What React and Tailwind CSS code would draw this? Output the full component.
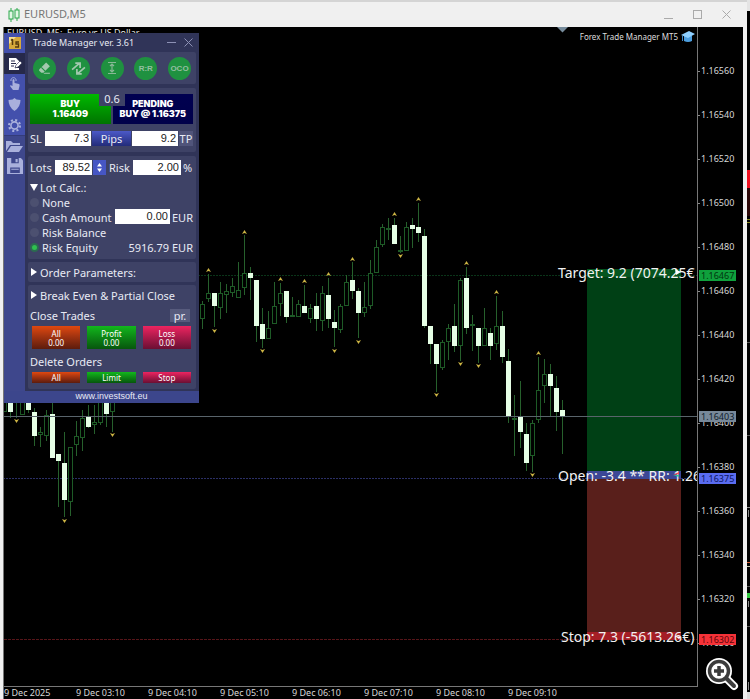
import React, { useState } from 'react'

// x, high, low, body top, body bottom, bearish (filled)
const candles = [
  [4, 385, 412, 390, 412, 0], [10, 390, 418, 395, 412, 1], [16, 385, 418, 390, 400, 0], [22, 385, 415, 390, 415, 0],
  [28, 385, 413, 390, 410, 1], [34, 408, 446, 412, 436, 1], [40, 427, 447, 432, 435, 0], [46, 410, 441, 415, 436, 0],
  [52, 402, 458, 414, 458, 1], [58, 454, 507, 454, 461, 1], [64, 432, 517, 463, 500, 1], [70, 447, 516, 447, 502, 0],
  [76, 421, 456, 436, 445, 0], [82, 410, 451, 418, 438, 0], [88, 405, 428, 417, 427, 1], [94, 405, 434, 422, 425, 0],
  [100, 390, 425, 400, 423, 0], [106, 390, 427, 400, 414, 1], [112, 390, 432, 400, 412, 0],
  [202, 301, 329, 304, 319, 0], [208, 274, 302, 293, 299, 0], [214, 293, 327, 293, 306, 1], [220, 282, 319, 293, 308, 0],
  [226, 284, 313, 291, 295, 0], [232, 278, 297, 286, 293, 0], [238, 262, 298, 290, 298, 0], [244, 235, 295, 273, 288, 0],
  [250, 267, 300, 273, 278, 1], [256, 280, 342, 280, 326, 1], [262, 308, 348, 324, 339, 1], [268, 311, 339, 328, 339, 0],
  [274, 282, 324, 306, 324, 0], [280, 283, 316, 293, 304, 0], [286, 291, 323, 291, 317, 1], [292, 297, 316, 315, 315, 0],
  [298, 300, 317, 304, 317, 0], [304, 285, 313, 306, 313, 1], [310, 304, 323, 308, 319, 0], [316, 293, 331, 306, 319, 1],
  [322, 286, 331, 293, 321, 0], [328, 278, 328, 295, 319, 1], [334, 310, 347, 322, 328, 1], [340, 304, 333, 306, 330, 0],
  [346, 275, 306, 282, 306, 0], [352, 262, 299, 280, 291, 1], [358, 288, 338, 291, 313, 1], [364, 282, 317, 307, 313, 0],
  [370, 260, 309, 273, 306, 0], [376, 240, 273, 247, 273, 0], [382, 224, 247, 227, 245, 0], [388, 218, 240, 228, 230, 0],
  [394, 218, 244, 225, 244, 1], [400, 236, 253, 250, 250, 0], [406, 222, 251, 227, 251, 0], [412, 218, 248, 225, 229, 1],
  [418, 203, 242, 227, 233, 1], [424, 229, 328, 236, 326, 1], [430, 326, 364, 326, 344, 1], [436, 344, 392, 344, 364, 1],
  [442, 340, 370, 342, 368, 0], [448, 324, 360, 328, 342, 0], [454, 304, 352, 326, 346, 1], [460, 278, 361, 280, 346, 0],
  [466, 267, 334, 278, 328, 1], [472, 315, 351, 324, 324, 0], [478, 328, 363, 328, 346, 1], [484, 308, 346, 328, 346, 0],
  [490, 328, 360, 333, 346, 1], [496, 296, 350, 326, 344, 0], [502, 311, 363, 326, 357, 1], [508, 349, 423, 361, 416, 1],
  [514, 395, 456, 418, 418, 0], [520, 381, 448, 416, 432, 1], [526, 423, 471, 434, 463, 1], [532, 420, 472, 423, 456, 0],
  [538, 357, 423, 390, 420, 0], [544, 359, 403, 374, 386, 0], [550, 364, 416, 374, 386, 1], [556, 376, 431, 388, 412, 1],
  [562, 400, 454, 410, 416, 1],
]

const fractalsUp = [[208, 270], [244, 232], [280, 279], [304, 281], [328, 274], [352, 259], [394, 214], [418, 199], [466, 263], [496, 292], [538, 353]]
const fractalsDown = [[16, 421], [64, 521], [112, 435], [214, 331], [262, 351], [334, 351], [358, 342], [400, 256], [436, 395], [460, 364], [478, 366], [532, 475]]

const prices = ['1.16560', '1.16540', '1.16520', '1.16500', '1.16480', '1.16460', '1.16440', '1.16420', '1.16400', '1.16380', '1.16360', '1.16340', '1.16320', '1.16300']
const times = ['9 Dec 2025', '9 Dec 03:10', '9 Dec 04:10', '9 Dec 05:10', '9 Dec 06:10', '9 Dec 07:10', '9 Dec 08:10', '9 Dec 09:10']

const Chart = () => (
  // the drawing keeps window coordinates, so it is shifted to the corner of the plot
  <svg className="absolute inset-0 h-full w-full" aria-label="EURUSD M5 chart">
    <g transform="translate(-4 -27)">
      <text x="7" y="36" fontSize="9" fill="#e5e5e5">EURUSD, M5:&#160; Euro vs US Dollar</text>
      <path d="M0 275.5H697" stroke="#0a3519" strokeDasharray="2 1" />
      <path d="M0 478.5H697" stroke="#2b2f66" strokeDasharray="2 1" />
      <path d="M0 639.5H697" stroke="#561519" strokeDasharray="3 1" />
      <g shapeRendering="crispEdges">
        {candles.map(([x, high, low, top, bottom, filled]) => (
          <g key={x}>
            <path d={`M${x + 0.5} ${high}V${low}`} stroke="#26602c" />
            {filled ? (
              <rect x={x - 2} y={top} width="5" height={bottom - top} fill="#e6ffe6" />
            ) : (
              <rect x={x - 1.5} y={top + 0.5} width="4" height={Math.max(bottom - top - 1, 0.5)} fill="#000" stroke="#1d5a26" />
            )}
          </g>
        ))}
      </g>
      {fractalsUp.map(([x, y]) => (
        <path key={x} d={`M${x - 2} ${y + 2}L${x + 0.5} ${y - 2}L${x + 3} ${y + 2}L${x + 0.5} ${y + 1}Z`} fill="#cdb544" />
      ))}
      {fractalsDown.map(([x, y]) => (
        <path key={x} d={`M${x - 2} ${y - 2}L${x + 0.5} ${y + 2}L${x + 3} ${y - 2}L${x + 0.5} ${y - 1}Z`} fill="#cdb544" />
      ))}

      {/* risk / reward boxes */}
      <rect x="587" y="269" width="94" height="203" fill="#004015" />
      <rect x="587" y="269" width="94" height="8" fill="#05551f" />
      <rect x="587" y="479" width="94" height="161" fill="#591f1b" />
      <rect x="587" y="471" width="94" height="8" fill="#3c4796" />
      <rect x="587" y="632" width="94" height="8" fill="#a51e26" />
      <path d="M0 416.5H697" stroke="#59646b" />
      <g fontSize="14" fill="#f2f2f2">
        <text x="558" y="278">Target: 9.2 (7074.25€</text>
        <text x="558" y="481">Open: -3.4 ** RR: 1.26</text>
        <text x="561" y="642">Stop: 7.3 (-5613.26€)</text>
      </g>
      <path d="M675 269L681 272L676 275Z M675 636L681 637L679 639Z" fill="#fff" />
      <path d="M673 475L679 472V474Z" fill="#ff4b4b" />
      <path d="M673 475L679 477V475Z" fill="#2fbf9a" />
      <path d="M557 27H568L562.500 32.500Z" fill="#778c9c" />
    </g>
  </svg>
)

const PriceTag = ({ children, className }) => (
  <span className={`absolute left-px h-[11px] w-[37px] pl-[2px] text-[9px] leading-[11px] ${className}`}>{children}</span>
)

const PriceAxis = () => (
  <div className="relative w-[46px] shrink-0 border-l border-[#777] pt-[22px]">
    {prices.map((p) => (
      <div key={p} className="flex h-11 items-center text-[9px] leading-3 text-[#d8d8d8]">
        <i className="mr-px h-px w-[2px] bg-[#888]" />
        {p}
      </div>
    ))}
    <PriceTag className="top-[243px] bg-[#0fa03c] text-[#02350f]">1.16467</PriceTag>
    <PriceTag className="top-[384px] bg-[#778899] text-[#10202c]">1.16403</PriceTag>
    <PriceTag className="top-[446px] bg-[#5a6cf0] text-[#0c1560]">1.16375</PriceTag>
    <PriceTag className="top-[607px] bg-[#f53238] text-[#5a0508]">1.16302</PriceTag>
  </div>
)

const Group = ({ children, className = '' }) => (
  <section className={`rounded-xs bg-[#3e4266] ${className}`}>{children}</section>
)

const SideIcons = () => (
  <nav className="flex w-[21px] shrink-0 flex-col bg-[#3e478c] text-[#a9b0dc]">
    <button aria-label="Home" className="flex h-5 items-center justify-center bg-[#4350ac]">
      <svg width="12" height="12" viewBox="0 0 12 12">
        <rect width="12" height="12" fill="#d6a93c" />
        <path d="M0 0H7L0 7Z" fill="#f4dd92" />
        <path d="M3.500 2V8M2 3.500L3.500 2" fill="none" stroke="#54380c" strokeWidth="1.500" />
        <path d="M10 5H7V7H9.500V10H6" fill="none" stroke="#54380c" strokeWidth="1.300" />
      </svg>
    </button>
    <button aria-label="Trade" className="flex h-[21px] items-center justify-center bg-[#26294a]">
      <svg width="14" height="14" viewBox="0 0 14 14">
        <path d="M1 1H8L11 4V6L7 10V11H11V13H1Z" fill="#fff" />
        <path d="M3 4H7M3 6.500H8M3 9H6" stroke="#26294a" />
        <path d="M7 11L8 8L12 4L14 6L10 10Z" fill="#fff" stroke="#26294a" strokeWidth=".6" />
      </svg>
    </button>
    <button aria-label="Click trading" className="flex h-5 items-center justify-center bg-[#4350ac]">
      <svg width="12" height="14" viewBox="0 0 12 14" fill="currentColor">
        <path d="M3.500 3Q4.500 1 5.500 3V6L10 7Q11 7.500 10.500 9L9.500 13H4L1 9Q1 7.500 3.500 9Z" />
        <path d="M2 4A2.600 2.600 0 1 1 7 4" fill="none" stroke="currentColor" />
      </svg>
    </button>
    <button aria-label="Protection" className="flex h-[21px] items-center justify-center bg-[#4350ac]">
      <svg width="13" height="13" viewBox="0 0 12 13" fill="currentColor">
        <path d="M6 0L8 1.500L12 2Q12 9 6 13Q0 9 0 2L4 1.500Z" />
      </svg>
    </button>
    <button aria-label="Settings" className="flex h-5 items-center justify-center bg-[#4350ac]">
      <svg width="13" height="13" viewBox="0 0 12 12" fill="none" stroke="currentColor">
        <circle cx="6" cy="6" r="3.300" strokeWidth="1.500" />
        <circle cx="6" cy="6" r="5" strokeWidth="2" strokeDasharray="1.900 2.027" />
      </svg>
    </button>
    <button aria-label="Open file" className="flex h-[21px] items-center justify-center border-t border-[#343c7a]">
      <svg width="17" height="14" viewBox="0 0 17 14" fill="currentColor">
        <path d="M0 12V2H5L7 4H14V6H4Z" />
        <path d="M5 7H17L13 13H1Z" />
      </svg>
    </button>
    <button aria-label="Save file" className="flex h-5 items-center justify-center">
      <svg width="16" height="16" viewBox="0 0 15 15">
        <path d="M0 0H13L15 2V15H0Z" fill="currentColor" />
        <path d="M4 0H11V5H4Z M3 9H12V14H3Z" fill="#3e478c" />
        <path d="M8 1H10V4H8Z M4 10H11V11H4Z" fill="currentColor" />
      </svg>
    </button>
  </nav>
)

const RoundButton = ({ label, children }) => (
  <button aria-label={label} className="flex size-[23px] items-center justify-center rounded-full bg-[#1f9140] font-['Liberation_Sans'] text-[8px] font-bold text-[#93bfa0]">
    {children}
  </button>
)

const Toolbar = () => (
  <Group className="flex h-8 items-center justify-between pr-[5px] pl-[5px]">
    <RoundButton label="Erase">
      <svg width="15" height="15" viewBox="0 0 14 14" fill="#a3c8ae">
        <path d="M2 8L8.500 1.500L12 5L6 11H4L2 9Z" />
        <path d="M4 6L8 10" stroke="#1f9140" />
        <path d="M7 11H12V12H6Z" />
      </svg>
    </RoundButton>
    <RoundButton label="Reverse">
      <svg width="15" height="15" viewBox="0 0 14 14" fill="none" stroke="#a3c8ae" strokeWidth="1.600">
        <path d="M1 8L8 2M4 2H8.500V6.500M13 6L6 12M10 12H5.500V7.500" />
      </svg>
    </RoundButton>
    <RoundButton label="Levels">
      <svg width="12" height="14" viewBox="0 0 12 14" fill="none" stroke="#88b896" strokeWidth="1.200">
        <path d="M2 1.500H10M2 12.500H10M6 3V11M4 5L6 3L8 5M4 9L6 11L8 9" />
      </svg>
    </RoundButton>
    <RoundButton label="Risk reward">R:R</RoundButton>
    <RoundButton label="One cancels other">OCO</RoundButton>
  </Group>
)

const Field = ({ label, value, className }) => (
  <input type="text" aria-label={label} defaultValue={value} className={`h-[15px] bg-white px-[2px] text-right font-['Liberation_Sans'] text-[11px] leading-[15px] text-[#222] outline-none ${className}`} />
)

const colors = {
  orange: 'from-[#e0480f] to-[#5d1c0c]',
  green: 'from-[#12b81c] to-[#07560d]',
  pink: 'from-[#ee2460] to-[#6b0f33]',
}

const ActionButton = ({ color, title, value }) => (
  <button className={`flex-1 bg-linear-to-b text-[8px] leading-[9px] text-white ${colors[color]} ${value ? 'h-[23px]' : 'h-[11px]'}`}>
    <span className="block">{title}</span>
    {value && <span className="block">{value}</span>}
  </button>
)

const lotModes = ['None', 'Cash Amount', 'Risk Balance', 'Risk Equity']

const TradeManager = () => {
  const [mode, setMode] = useState('Risk Equity')

  return (
    <div className="absolute top-[6px] left-0 w-[195px] bg-[#3c468c] text-[11px] leading-[15px] text-[#e8eaf4]">
      <div className="flex">
        <SideIcons />
        <div className="flex-1 bg-[#303458] pr-[3px] pl-[3px]">
          {/* Title */}
          <div className="flex h-[19px] items-center pr-[3px] pl-[5px]">
            <h1 className="flex-1 text-[9px] whitespace-nowrap">Trade Manager ver. 3.61</h1>
            <button aria-label="Minimize" className="mr-2">
              <svg width="9" height="9" stroke="#8d91b5"><path d="M0 4.500H9" /></svg>
            </button>
            <button aria-label="Close">
              <svg width="9" height="9" stroke="#8d91b5"><path d="M0.500 0.500L8.500 8.500M8.500 0.500L0.500 8.500" /></svg>
            </button>
          </div>

          <Toolbar />

          {/* Buy / pending */}
          <Group className="mt-1 h-16 pt-[6px] pr-[3px] pl-[2px]">
            <div className="relative flex gap-[2px] font-['Inter'] text-[9px] leading-[10px] font-black text-white">
              <button className="h-[30px] flex-1 bg-linear-to-b from-[#00ba00] to-[#007400]">BUY<br />1.16409</button>
              <button className="h-[30px] flex-1 bg-linear-to-b from-[#000050] to-[#00004a] whitespace-nowrap">PENDING<br />BUY @ 1.16375</button>
              <span className="absolute -top-[2px] left-[69px] h-[14px] w-[26px] bg-[#3e4266] text-center font-['Noto_Sans'] text-[11px] leading-[14px] font-normal text-[#e8eaf4]">0.6</span>
            </div>
            <div className="mt-[7px] flex items-center">
              <span className="w-[15px]">SL</span>
              <Field label="Stop loss" value="7.3" className="w-[46px]" />
              <button className="mx-px h-[15px] flex-1 bg-linear-to-b from-[#4c59c8] to-[#232c7a]">Pips</button>
              <Field label="Take profit" value="9.2" className="w-[46px]" />
              <span className="ml-px w-[14px] bg-[#50547a] text-center">TP</span>
            </div>
          </Group>

          {/* Lots and risk */}
          <Group className="mt-1 h-[103px] pt-1 pr-[3px] pl-[2px]">
            <div className="flex items-center">
              <span className="w-[25px]">Lots</span>
              <Field label="Lots" value="89.52" className="w-[37px]" />
              <button aria-label="Change lots" className="ml-px flex h-[15px] w-[13px] items-center justify-center bg-[#4656c4]">
                <svg width="7" height="9" fill="#fff"><path d="M3.500 0L6 3.500H1Z M3.500 9L6 5.500H1Z" /></svg>
              </button>
              <span className="ml-[3px] flex-1">Risk</span>
              <Field label="Risk" value="2.00" className="w-[48px]" />
              <span className="ml-[2px] w-[10px]">%</span>
            </div>
            <div className="mt-[5px] flex items-center">
              <svg width="8" height="7" className="mr-[2px]" fill="#fff"><path d="M0 0H8L4 7Z" /></svg>
              Lot Calc.:
            </div>
            {lotModes.map((m) => (
              <div key={m} className="flex h-[15px] items-center">
                <label className="flex flex-1 items-center whitespace-nowrap">
                  <input type="radio" name="lotMode" checked={mode === m} onChange={() => setMode(m)} className="mr-[3px] size-[9px] appearance-none rounded-full bg-[#4c5070] checked:border-2 checked:border-[#2b6b50] checked:bg-[#2fc04f]" />
                  {m}
                </label>
                {m === 'Cash Amount' && (
                  <>
                    <Field label="Cash amount" value="0.00" className="mb-[2px] h-[13px] w-[55px]" />
                    <span className="ml-[2px]">EUR</span>
                  </>
                )}
                {m === 'Risk Equity' && <span>5916.79 EUR</span>}
              </div>
            ))}
          </Group>

          <Group className="mt-[3px] h-5 pl-[3px]">
            <button className="flex h-5 items-center">
              <svg width="6" height="8" className="mr-[3px]" fill="#fff"><path d="M0 0L6 4L0 8Z" /></svg>
              Order Parameters:
            </button>
          </Group>

          <Group className="mt-[3px] h-[104px] pr-[3px] pl-[2px]">
            <button className="flex h-5 items-center pl-px">
              <svg width="6" height="8" className="mr-[3px]" fill="#fff"><path d="M0 0L6 4L0 8Z" /></svg>
              Break Even &amp; Partial Close
            </button>
            <div className="flex h-[21px] items-center justify-between">
              <h2>Close Trades</h2>
              <button className="mr-[3px] h-[13px] w-5 bg-[#575b7d] leading-3">pr.</button>
            </div>
            <div className="flex gap-[7px] pr-[2px] pl-[2px]">
              <ActionButton color="orange" title="All" value="0.00" />
              <ActionButton color="green" title="Profit" value="0.00" />
              <ActionButton color="pink" title="Loss" value="0.00" />
            </div>
            <h2 className="mt-[5px] mb-[3px]">Delete Orders</h2>
            <div className="flex gap-[7px] pr-[2px] pl-[2px]">
              <ActionButton color="orange" title="All" />
              <ActionButton color="green" title="Limit" />
              <ActionButton color="pink" title="Stop" />
            </div>
          </Group>
          <div className="h-[2px]" />
        </div>
      </div>
      <footer className="h-3 pl-5 text-center font-['Liberation_Sans'] text-[9px] leading-[11px]">
        <a href="#investsoft">www.investsoft.eu</a>
      </footer>
    </div>
  )
}

const TitleBar = () => (
  <header className="flex h-[25px] items-center bg-[#f0f0f0] pr-3 pl-px">
    <svg width="12" height="14" className="ml-1" fill="#e2f7e4" stroke="#2aa84a">
      <path d="M3 0V14M9 0V13" />
      <rect x="1" y="3" width="4" height="8" />
      <rect x="7" y="2" width="4" height="8" />
    </svg>
    <h1 className="ml-1 flex-1 text-[11px] text-[#777]">EURUSD,M5</h1>
    <div className="flex gap-5">
      <button aria-label="Minimize"><svg width="9" height="9" stroke="#aaa"><path d="M0 8.500H9" /></svg></button>
      <button aria-label="Maximize"><svg width="9" height="9" fill="none" stroke="#aaa"><rect x=".5" y=".5" width="8" height="8" /></svg></button>
      <button aria-label="Close"><svg width="9" height="9" stroke="#aaa"><path d="M0.500 0.500L8.500 8.500M8.500 0.500L0.500 8.500" /></svg></button>
    </div>
  </header>
)

// sliver of the neighbouring chart window
const NextWindow = () => (
  <svg className="w-[3px] shrink-0 bg-black" shapeRendering="crispEdges">
    <rect width="3" height="11" fill="#e4e4e4" />
    <rect y="170" width="3" height="18" fill="#f01020" />
    <rect y="188" width="3" height="28" fill="#2c0808" />
    <path d="M0 219.500H3M0 222.500H3" stroke="#8a8a20" />
    <path d="M0 342.500H3M0 435.500H3M0 586.500H3M0 626.500H3" stroke="#555" />
    <path d="M0 507.500H3M1.500 510V517M1.500 601V607M1.500 682V690" stroke="#888" />
    <path d="M0 562.500H3" stroke="#d05a30" />
    <path d="M0 566.500H3" stroke="#c8c8b0" />
    <rect y="593" width="3" height="5" fill="#2ec83c" />
    <rect y="692" width="3" height="7" fill="#ddd" />
  </svg>
)

const App = () => {
  return (
    <div className="flex min-h-screen bg-[#f0f0f0] font-['Noto_Sans',sans-serif]">
      <main className="flex flex-1 flex-col border-t-2 border-[#d4d4d4] pr-1 pl-[3px]">
        <TitleBar />
        <div className="relative flex flex-1 flex-col border-l border-[#777] bg-black">
          <div className="flex flex-1">
            <div className="relative flex-1 overflow-hidden border-b border-[#777]">
              <Chart />
              <a href="#manager" className="absolute top-[2px] right-[2px] flex items-center gap-[3px] text-[8px] leading-4 text-[#ddd]">
                Forex Trade Manager MT5
                <svg width="14" height="12" viewBox="0 0 14 12">
                  <path d="M3 5V10Q7 12 11 10V5Z" fill="#4d9fe0" />
                  <path d="M0 4L8 0L14 3L7 7Z" fill="#8fd0ff" />
                  <path d="M1.500 5V10" stroke="#3b86c8" />
                </svg>
              </a>
              <TradeManager />
            </div>
            <PriceAxis />
          </div>
          <div className="flex h-3 text-[9px] leading-3 text-[#d8d8d8]">
            {times.map((t) => (
              <span key={t} className="w-[72px] whitespace-nowrap">{t}</span>
            ))}
          </div>
          <button aria-label="Zoom in" className="absolute right-1 bottom-2">
            <svg width="34" height="34" viewBox="0 0 34 34">
              <path d="M21 21L29 29" stroke="#fff" strokeWidth="8" strokeLinecap="round" />
              <circle cx="14" cy="14" r="13" fill="#fff" />
              <path d="M21 21L29 29" stroke="#3c3c3c" strokeWidth="4" strokeLinecap="round" />
              <circle cx="14" cy="14" r="9.500" fill="#fff" stroke="#3c3c3c" strokeWidth="3.500" />
              <path d="M14 9V19M9 14H19" stroke="#3c3c3c" strokeWidth="3.500" />
            </svg>
          </button>
        </div>
      </main>
      <NextWindow />
    </div>
  )
}

export default App
